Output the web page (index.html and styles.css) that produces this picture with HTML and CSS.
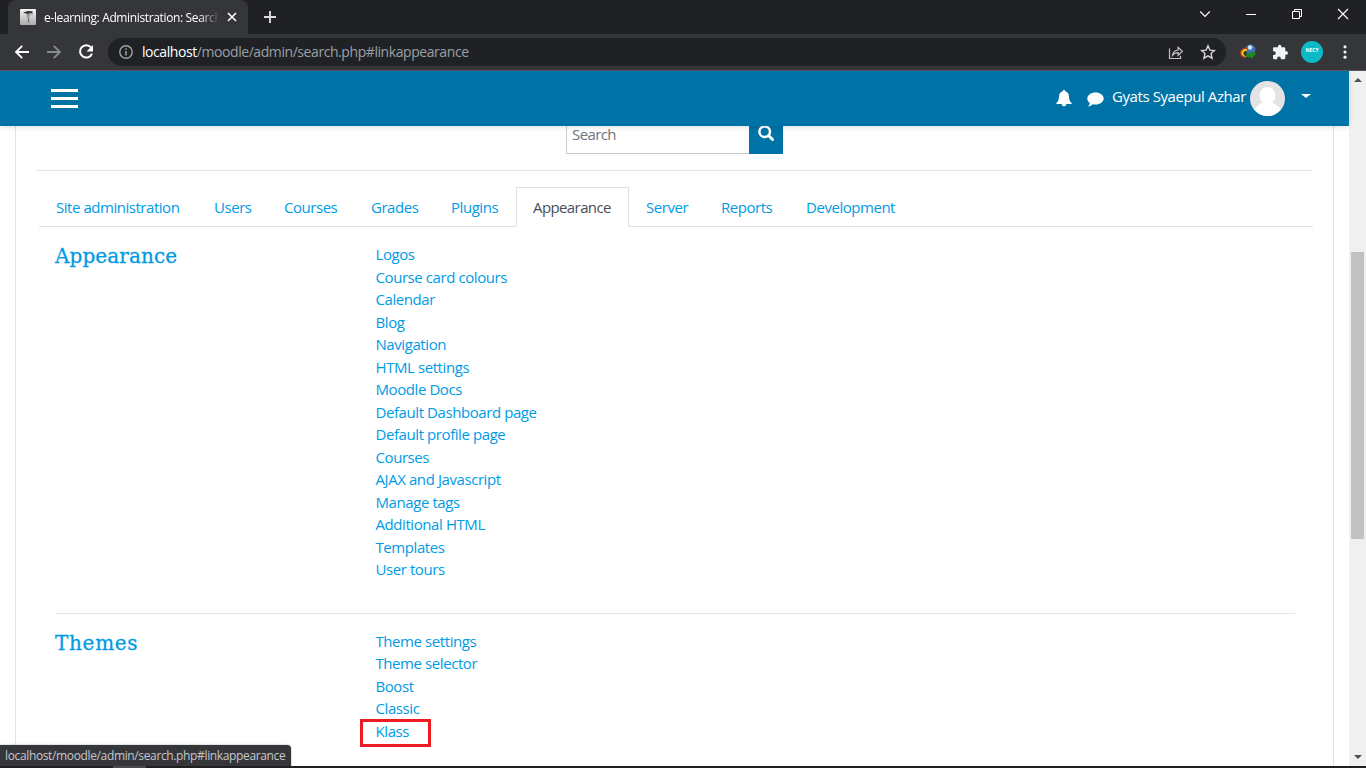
FILE: index.html
```
<!DOCTYPE html>
<html lang="en">
<head>
    <meta charset="UTF-8">
    <meta name="viewport" content="width=device-width, initial-scale=1.0">
    <title>e-learning: Administration: Search</title>
    <link rel="stylesheet" href="styles.css">
</head>
<body>
    <div class="browser">
        <div class="tab-strip">
            <div class="browser-tab">
                <svg class="favicon" width="16" height="16" viewBox="0 0 16 16">
                    <defs>
                        <linearGradient id="fav" x1="0" y1="0" x2="0" y2="1">
                            <stop offset="0" stop-color="#f4f4f4"/>
                            <stop offset="1" stop-color="#aaa"/>
                        </linearGradient>
                    </defs>
                    <rect width="16" height="16" rx="1" fill="url(#fav)"/>
                    <path d="M3 3.600l5-1.600 4.500.3-.3 1.700-5 1z" fill="#333"/>
                    <path d="M6.500 5.200l4-.7-.6 3L8.500 9l.5 4.500H8L7.500 9 6.500 7.500z" fill="#999"/>
                    <path d="M12 3v3M8.700 9.500v4" stroke="#555" stroke-width=".8"/>
                </svg>
                <span class="tab-title">e-learning: Administration: Search</span>
                <svg class="tab-close" width="10" height="10" viewBox="0 0 10 10"><path d="M1 1l8 8M9 1L1 9" stroke="#fff" stroke-width="1.6"/></svg>
            </div>
            <svg class="new-tab" width="14" height="14" viewBox="0 0 14 14"><path d="M7 1v12M1 7h12" stroke="#dcdcdd" stroke-width="1.9"/></svg>
            <div class="window-buttons">
                <svg width="12" height="12" viewBox="0 0 12 12"><path d="M1.2 3.5l4.8 5 4.8-5" fill="none" stroke="#fff" stroke-width="1.1"/></svg>
                <svg width="12" height="12" viewBox="0 0 12 12"><path d="M1 6.5h10" stroke="#fff"/></svg>
                <svg width="12" height="12" viewBox="0 0 12 12"><path d="M1.5 3.5h7v7h-7zM3.5 3.5v-2h7v7h-2" fill="none" stroke="#fff"/></svg>
                <svg width="12" height="12" viewBox="0 0 12 12"><path d="M1 1l10 10M11 1L1 11" stroke="#fff" stroke-width="1.1"/></svg>
            </div>
        </div>

        <div class="toolbar">
            <svg width="16" height="16" viewBox="0 0 16 16"><path d="M15 8H2.5M8.2 1.8L2 8l6.2 6.2" fill="none" stroke="#fff" stroke-width="1.800"/></svg>
            <svg width="16" height="16" viewBox="0 0 16 16"><path d="M1 8h12.5M7.8 1.8L14 8l-6.2 6.2" fill="none" stroke="#88898c" stroke-width="1.800"/></svg>
            <svg width="16" height="16" viewBox="0 0 16 16"><path d="M13 3.4A6.2 6.2 0 1 0 14 9.6" fill="none" stroke="#fff" stroke-width="2"/><path d="M15 1v6.500H8.500z" fill="#fff"/></svg>
            <div class="address-bar">
                <svg width="14" height="14" viewBox="0 0 14 14"><circle cx="7" cy="7" r="6.2" fill="none" stroke="#a0a2a5" stroke-width="1.4"/><path d="M7 6v4.500M7 3.300v1.500" stroke="#a0a2a5" stroke-width="1.5"/></svg>
                <span class="url"><b>localhost</b>/moodle/admin/search.php#linkappearance</span>
                <svg width="16" height="16" viewBox="0 0 16 16"><path d="M1.500 4.500v10h11v-2.700M4.500 11.300c.4-3.300 2.400-5 5.600-5.300V3.300l4.300 4-4.300 4V8.700c-2.500 0-4.200.7-5.600 2.600z" fill="none" stroke="#c3c4c6" stroke-width="1.2"/></svg>
                <svg class="star" width="16" height="16" viewBox="0 0 16 16"><path d="M8 1.800l1.900 4.300 4.600.4-3.500 3.100 1.100 4.600L8 11.800l-4.100 2.400L5 9.600 1.500 6.500l4.600-.4z" fill="none" stroke="#d6d7d9" stroke-width="1.4"/></svg>
            </div>
            <svg class="idm" width="18" height="16" viewBox="0 0 18 16">
                <circle cx="11.500" cy="5.500" r="5" fill="#3f74bd"/>
                <circle cx="11" cy="3.500" r="2.200" fill="#d5e3ef"/>
                <path d="M8.500 3.500C4.500 3 1 5.500 1 9c0 2.500 2 4.500 5 5l2-3-2-2z" fill="#c93a22"/>
                <path d="M8 5C5 4.800 2.500 6.500 2.500 9c0 2 1.800 3.500 4.500 4l2-3-2-1z" fill="#f1d62b"/>
                <path d="M7.500 6.800C5.500 7 4.300 8 4.300 9.300c0 2 2 3.200 4.700 3.400l1-3-2 .3z" fill="#333a26"/>
                <path d="M8 10c1 .3 2 .3 3-.2V7.500l6.500 1.700-5.700 6.300v-2.400c-2 .3-4.500 0-6.300-1.200 1.200 0 2-.6 2.500-1.900z" fill="#148e1c"/>
            </svg>
            <svg class="puzzle" width="16" height="16" viewBox="0 0 24 24"><path d="M21.500 11H20V7a2 2 0 0 0-2-2h-4V3.500a2.500 2.500 0 0 0-5 0V5H3.500a2 2 0 0 0-2 2v4H3a2.700 2.700 0 0 1 0 5.400H1.500V21a2 2 0 0 0 2 2h4.300v-1.500a2.700 2.700 0 0 1 5.400 0V23H18a2 2 0 0 0 2-2v-5h1.500a2.500 2.500 0 0 0 0-5z" fill="#f1f3f4"/></svg>
            <div class="chrome-avatar">NECY</div>
            <svg class="kebab" width="4" height="16" viewBox="0 0 4 16"><g fill="#f1f3f4"><circle cx="2" cy="2.800" r="1.600"/><circle cx="2" cy="8" r="1.600"/><circle cx="2" cy="13.200" r="1.600"/></g></svg>
        </div>

        <div class="viewport">
            <div class="page">
                <header class="navbar">
                    <div class="burger"><span></span><span></span><span></span></div>
                    <div class="user-nav">
                        <svg class="bell" width="16" height="17" viewBox="0 0 16 17"><path d="M8 0c.8 0 1.200.5 1.200 1.300C11.800 1.900 13 4 13 6.500c0 3.500 1 5.200 2.700 6.500v1h-5.400a2.300 2.300 0 0 1-4.600 0H.3v-1C2 11.700 3 10 3 6.500 3 4 4.200 1.900 6.800 1.300 6.800.5 7.200 0 8 0z" fill="#fff"/></svg>
                        <svg class="bubble" width="17" height="15" viewBox="0 0 17 15"><path d="M8.500.5c4.600 0 8.200 2.700 8.200 6s-3.600 6-8.200 6c-.9 0-1.800-.1-2.600-.3C4.500 13.400 2.900 14.200 1 14.400c.9-1 1.500-1.900 1.700-3.400C1.200 9.900.3 8.300.3 6.500c0-3.300 3.600-6 8.200-6z" fill="#fff"/></svg>
                        <span class="user-name">Gyats Syaepul Azhar</span>
                        <svg class="user-picture" width="35" height="35" viewBox="0 0 35 35">
                            <defs><clipPath id="round"><circle cx="17.500" cy="17.500" r="17.500"/></clipPath></defs>
                            <g clip-path="url(#round)">
                                <rect width="35" height="35" fill="#e3e3e3"/>
                                <ellipse cx="17.500" cy="14.500" rx="8" ry="8.500" fill="#fff"/>
                                <path d="M2 35c1-8 6-11 10-13h11c4 2 9 5 10 13z" fill="#fff"/>
                            </g>
                        </svg>
                        <span class="caret"></span>
                    </div>
                </header>

                <div class="content">
                    <main class="card">
                        <div class="search-form">
                            <input class="search-input" type="text" placeholder="Search">
                            <button class="search-btn" aria-label="Search">
                                <svg width="16" height="16" viewBox="0 0 16 16"><circle cx="6.700" cy="6.700" r="5.300" fill="none" stroke="#fff" stroke-width="2.500"/><path d="M10.500 10.500l4 4" stroke="#fff" stroke-width="3" stroke-linecap="round"/></svg>
                            </button>
                        </div>
                        <hr class="divider">
                        <nav class="tabs">
                            <a>Site administration</a>
                            <a>Users</a>
                            <a>Courses</a>
                            <a>Grades</a>
                            <a>Plugins</a>
                            <a class="active">Appearance</a>
                            <a>Server</a>
                            <a>Reports</a>
                            <a>Development</a>
                        </nav>

                        <section class="category">
                            <h4>Appearance</h4>
                            <ul>
                                <li>Logos</li>
                                <li>Course card colours</li>
                                <li>Calendar</li>
                                <li>Blog</li>
                                <li>Navigation</li>
                                <li>HTML settings</li>
                                <li>Moodle Docs</li>
                                <li>Default Dashboard page</li>
                                <li>Default profile page</li>
                                <li>Courses</li>
                                <li>AJAX and Javascript</li>
                                <li>Manage tags</li>
                                <li>Additional HTML</li>
                                <li>Templates</li>
                                <li>User tours</li>
                            </ul>
                        </section>
                        <section class="category themes">
                            <h4>Themes</h4>
                            <ul>
                                <li>Theme settings</li>
                                <li>Theme selector</li>
                                <li>Boost</li>
                                <li>Classic</li>
                                <li class="marked">Klass</li>
                            </ul>
                        </section>
                    </main>
                </div>
            </div>

            <div class="scrollbar">
                <span class="arrow-up"></span>
                <span class="thumb"></span>
                <span class="arrow-down"></span>
            </div>
            <div class="status-bubble">localhost/moodle/admin/search.php#linkappearance</div>
        </div>
        <div class="taskbar"><span></span></div>
    </div>
</body>
</html>
```
FILE: styles.css
```
* {
    box-sizing: border-box;
}

body {
    margin: 0;
    font-family: "Open Sans", "Noto Sans", sans-serif;
    font-size: 15px;
    color: #495057;
    background-color: #fff;
}

svg {
    display: block;
    flex-shrink: 0;
}

.browser {
    display: flex;
    flex-direction: column;
    height: 768px;
    overflow: hidden;
}

/* browser chrome */
.tab-strip {
    display: flex;
    align-items: center;
    height: 34px;
    padding-left: 8px;
    background-color: #202124;
}

.browser-tab {
    display: flex;
    align-items: center;
    width: 240px;
    height: 34px;
    padding: 0 12px;
    border-radius: 8px 8px 0 0;
    background-color: #35363a;
}

.tab-title {
    flex: 0 0 176px;
    width: 176px;
    margin: 0 8px;
    overflow: hidden;
    white-space: nowrap;
    font-size: 12px;
    letter-spacing: -0.36px;
    color: #fff;
    -webkit-mask-image: linear-gradient(to right, #000 155px, transparent 176px);
    mask-image: linear-gradient(to right, #000 155px, transparent 176px);
}

.tab-close {
    margin-left: -1px;
}

.new-tab {
    margin-left: 15px;
}

.window-buttons {
    display: flex;
    gap: 34px;
    margin: -6px 17px 0 auto;
}

.toolbar {
    display: flex;
    align-items: center;
    height: 37px;
    padding: 0 19px 0 14px;
    gap: 16px;
    border-bottom: 1px solid #55565a;
    background-color: #35363a;
}

.address-bar {
    display: flex;
    align-items: center;
    width: 1118px;
    height: 28px;
    margin-left: -2px;
    padding: 0 10px 0 11px;
    border-radius: 14px;
    background-color: #202124;
    flex-shrink: 0;
}

.url {
    flex: 1;
    margin: -1px 0 0 9px;
    font-size: 14px;
    letter-spacing: -0.43px;
    color: #9aa0a6;
}

.url b {
    font-weight: normal;
    color: #fff;
}

.star {
    margin-left: 16px;
}

.idm {
    margin: 0 -1px 0 -3px;
}

.chrome-avatar {
    flex-shrink: 0;
    width: 22px;
    height: 22px;
    margin-left: -3px;
    border-radius: 50%;
    background-color: #0cb9c7;
    color: #fff;
    font-size: 5px;
    font-weight: bold;
    line-height: 18px;
    text-align: center;
}

.kebab {
    margin-left: 4px;
}

.viewport {
    position: relative;
    display: flex;
    height: 695px;
    overflow: hidden;
}

.page {
    flex: 1;
}

/* moodle header */
.navbar {
    position: relative;
    z-index: 1;
    display: flex;
    align-items: center;
    justify-content: space-between;
    height: 55px;
    padding: 0 38px 0 51px;
    background-color: #0073a6;
    box-shadow: 0 1px 5px rgba(0, 0, 0, 0.15);
}

.burger {
    display: grid;
    gap: 5px;
    width: 27px;
}

.burger span {
    height: 3px;
    background-color: #fff;
}

.user-nav {
    display: flex;
    align-items: center;
    color: #fff;
}

.bubble {
    margin: 2px 8px 0 15px;
}

.user-name {
    width: 138px;
    margin-top: -5px;
    font-size: 15px;
    letter-spacing: -0.42px;
    white-space: nowrap;
}

.caret {
    margin: -6px 0 0 16px;
    border: 5px solid transparent;
    border-top: 4px solid #fff;
    border-bottom: 0;
}

/* admin page */
.content {
    height: 640px;
    padding: 0 15px;
    overflow: hidden;
}

.card {
    height: 700px;
    margin-top: -20px;
    padding: 10px 20px 0;
    border: 1px solid #dee2e6;
}

.search-form {
    display: flex;
    justify-content: center;
    height: 37px;
}

.search-input {
    width: 183px;
    height: 37px;
    padding: 0 5px 4px;
    border: 1px solid #c8cacc;
    border-right: 0;
    border-radius: 0;
    font: inherit;
    letter-spacing: -0.6px;
}

.search-input::placeholder {
    color: #6c757d;
}

.search-btn {
    width: 34px;
    height: 37px;
    padding: 0 0 6px 9px;
    border: none;
    background-color: #0073a6;
}

.divider {
    height: 1px;
    margin: 16px 0;
    border: none;
    background-color: #e5e5e5;
}

.tabs {
    display: grid;
    grid-template-columns: 158px 70px 87px 80px 82px 113px 75px 85px auto;
    height: 40px;
    margin-left: 3px;
    border-bottom: 1px solid #dee2e6;
}

.tabs a {
    height: 40px;
    padding: 0 0 0 16px;
    border: 1px solid transparent;
    line-height: 39px;
    letter-spacing: -0.46px;
    white-space: nowrap;
    color: #009be5;
}

.tabs .active {
    border-color: #dee2e6;
    border-bottom-color: #fff;
    background-color: #fff;
    color: #495057;
    letter-spacing: -0.6px;
}

.category {
    display: grid;
    grid-template-columns: 321px 1fr;
    align-items: start;
    margin: 0 18px 0 19px;
    padding-top: 16px;
    color: #009be5;
}

.category h4 {
    margin: 1px 0 0;
    font-family: "DejaVu Serif", serif;
    font-size: 20px;
    font-weight: normal;
    line-height: 24px;
    letter-spacing: 0.1px;
    -webkit-text-stroke: 0.3px #009be5;
}

.category ul {
    margin: 0 0 0 -0.5px;
    padding: 0;
    list-style: none;
    line-height: 22.5px;
    letter-spacing: -0.42px;
}

.category.themes {
    margin-top: 32px;
    border-top: 1px solid #e5e5e5;
}

.themes h4 {
    letter-spacing: 0.7px;
}

/* red frame around the theme link */
.marked {
    width: 71px;
    height: 28px;
    margin: -1px 0 0 -15.5px;
    padding-left: 12.5px;
    border: 3px solid #ed1c24;
    line-height: 19px;
}

.scrollbar {
    display: flex;
    flex-direction: column;
    align-items: center;
    width: 17px;
    padding: 7px 0;
    background-color: #f0f0f0;
}

.arrow-up,
.arrow-down {
    border: 4px solid transparent;
}

.arrow-up {
    border-top: 0;
    border-bottom-color: #505050;
}

.arrow-down {
    margin-top: auto;
    border-bottom: 0;
    border-top-color: #505050;
}

.thumb {
    width: 13px;
    height: 287px;
    margin-top: 170px;
    background-color: #c1c1c1;
}

.status-bubble {
    position: absolute;
    left: 0;
    bottom: 0;
    width: 291px;
    height: 21px;
    padding-left: 5px;
    border-radius: 0 4px 0 0;
    background-color: #35363a;
    color: #c5c7ca;
    font-size: 12px;
    line-height: 21px;
    letter-spacing: -0.36px;
    white-space: nowrap;
    box-shadow: 0 0 2px rgba(0, 0, 0, 0.4);
}

.taskbar {
    height: 2px;
    padding-left: 113px;
    background-color: #202020;
}

.taskbar span {
    display: block;
    width: 33px;
    height: 2px;
    background-color: #4b4b4b;
}
```
